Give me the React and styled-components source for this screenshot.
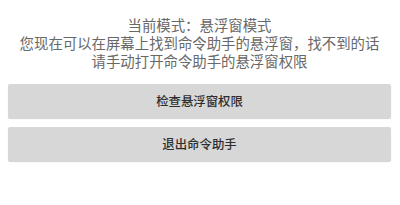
import React from 'react'
import styled, { createGlobalStyle } from 'styled-components'

const Global = createGlobalStyle`
  body {
    margin: 0;
    background: #ffffff;
    font-family: 'Noto Sans CJK SC', 'Noto Sans', sans-serif;
  }
`

const Page = styled.div`
  width: 400px;
  height: 205px;
  box-sizing: border-box;
  padding: 16px 9px 0 8px;
  background: #fff;
`

const Message = styled.div`
  text-align: center;
  font-size: 14.4px;
  line-height: 18px;
  color: #686868;
`

const Line = styled.div`
  height: 18px;
`

const Actions = styled.div`
  display: flex;
  flex-direction: column;
  gap: 9px;
  margin-top: 14px;
`

const Button = styled.button`
  display: flex;
  align-items: center;
  justify-content: center;
  height: 34px;
  width: 100%;
  border: none;
  border-radius: 2px;
  background: #d7d7d7;
  box-shadow: 0 1px 1px rgba(0, 0, 0, 0.18);
  color: #2e2e2e;
  font-family: inherit;
  font-size: 12.4px;
  font-weight: 500;
  padding: 0;
`

export default function App() {
  return (
    <Page>
      <Global />
      <Message>
        <Line>当前模式：悬浮窗模式</Line>
        <Line>您现在可以在屏幕上找到命令助手的悬浮窗，找不到的话</Line>
        <Line>请手动打开命令助手的悬浮窗权限</Line>
      </Message>
      <Actions>
        <Button>检查悬浮窗权限</Button>
        <Button>退出命令助手</Button>
      </Actions>
    </Page>
  )
}
